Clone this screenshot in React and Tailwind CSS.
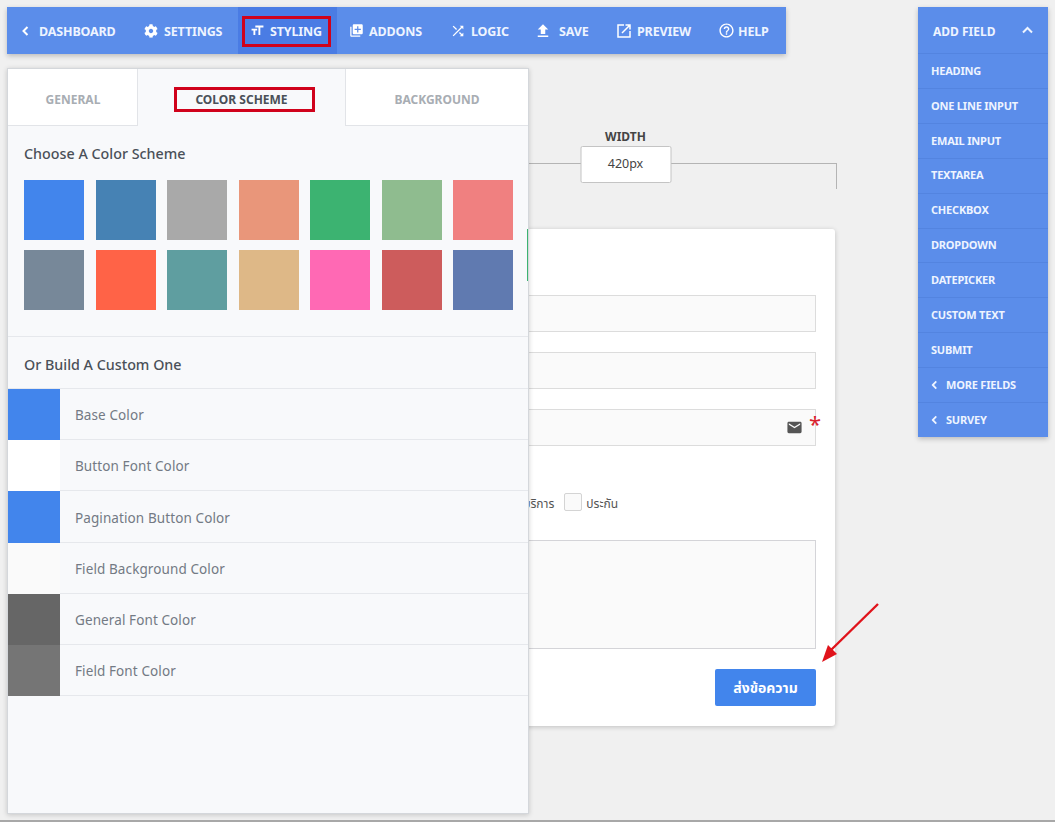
import React from "react";
import { MdTextFields, MdLibraryAdd, MdShuffle, MdFileUpload, MdHelpOutline, MdEmail } from "react-icons/md";
import { FaCog } from "react-icons/fa";

const font = "font-['Noto_Sans','Liberation_Sans',sans-serif]";
const thai = "font-['Noto_Sans','Noto_Sans_Thai','Liberation_Sans',sans-serif]";

function ChevronLeft({ className = "" }) {
  return (
    <svg className={className} width="7" height="10" viewBox="0 0 7 10" fill="none" stroke="currentColor" strokeWidth="2">
      <path d="M5.5 1L1.5 5l4 4" />
    </svg>
  );
}

function PreviewIcon() {
  return (
    <svg width="14" height="14" viewBox="0 0 14 14" fill="none" stroke="currentColor" strokeWidth="1.5">
      <path d="M7 1H1v12h12V7" />
      <path d="M5 9l8-8M8.5 1H13v4.5" />
    </svg>
  );
}

const nav = [
  { t: "DASHBOARD", w: "w-[124px] pl-[15px]", g: "gap-[10px]", i: <ChevronLeft /> },
  { t: "SETTINGS", w: "w-[107px] pl-[13px]", g: "gap-[6px]", i: <FaCog size={14} /> },
  { t: "STYLING", w: "w-[99px] pl-[12px] bg-[#4a7ce4]", g: "gap-[5px]", i: <MdTextFields size={15} className="-scale-x-100" /> },
  { t: "ADDONS", w: "w-[102px] pl-[12px]", g: "gap-[5px]", i: <MdLibraryAdd size={15} /> },
  { t: "LOGIC", w: "w-[84px] pl-[11px]", g: "gap-[5px]", i: <MdShuffle size={16} /> },
  { t: "SAVE", w: "w-[81px] pl-[11px]", g: "gap-[7px]", i: <MdFileUpload size={18} /> },
  { t: "PREVIEW", w: "w-[102px] pl-[13px]", g: "gap-[6px]", i: <PreviewIcon /> },
  { t: "HELP", w: "w-[80px] pl-[12px]", g: "gap-[3px]", i: <MdHelpOutline size={17} /> },
];

const swatches = [
  "bg-[#4285ec]", "bg-[#4682b4]", "bg-[#a9a9a9]", "bg-[#e9967a]", "bg-[#3cb371]", "bg-[#8fbc8f]", "bg-[#f08080]",
  "bg-[#778899]", "bg-[#ff6347]", "bg-[#5f9ea0]", "bg-[#deb887]", "bg-[#ff69b4]", "bg-[#cd5c5c]", "bg-[#607ab0]",
];

const rows = [
  ["Base Color", "bg-[#4285ec]", "h-[51px]"],
  ["Button Font Color", "bg-white", "h-[51px]"],
  ["Pagination Button Color", "bg-[#4285ec]", "h-[52px]"],
  ["Field Background Color", "bg-[#fafafa]", "h-[51px]"],
  ["General Font Color", "bg-[#666666]", "h-[51px]"],
  ["Field Font Color", "bg-[#757575]", "h-[51px]"],
];

const fields = [
  ["HEADING"], ["ONE LINE INPUT"], ["EMAIL INPUT"], ["TEXTAREA"], ["CHECKBOX"], ["DROPDOWN"],
  ["DATEPICKER"], ["CUSTOM TEXT"], ["SUBMIT"], ["MORE FIELDS", true], ["SURVEY", true],
];

const inputCls = "h-[37px] border border-[#dcdcdc] bg-[#fafafa]";

export default function App() {
  return (
    <div className={`${font} relative flex w-[1055px] h-[822px] overflow-hidden bg-[#f0f0f0] pt-[7px] pl-[7px] border-b-2 border-[#a8a8a8]`}>
      <div className="w-[779px] shrink-0">
        {/* toolbar */}
        <div className="relative flex h-[47px] bg-[#5b8dea] text-white shadow-[0_2px_5px_rgba(0,0,0,0.22)]">
          {nav.map((n) => (
            <div key={n.t} className={`flex h-full shrink-0 items-center ${n.w} ${n.g}`}>
              <span className="flex items-center justify-center">{n.i}</span>
              <span className="pt-[4px] text-[12.5px] font-bold tracking-[-0.15px] text-[#eef4ff]">{n.t}</span>
            </div>
          ))}
          <div className="absolute left-[235px] top-[9px] h-[31px] w-[89px] border-[3px] border-[#d0021b]" />
        </div>

        <div className="mt-[14px] flex items-start">
          {/* panel */}
          <div className="relative z-10 flex h-[746px] w-[522px] shrink-0 flex-col border border-[#d4d7db] bg-[#f8f9fb] shadow-[0_1px_5px_rgba(0,0,0,0.18)]">
            <div className="relative flex h-[57px] shrink-0 text-[12px] font-bold">
              <div className="flex w-[130px] items-center justify-center border-b border-r border-[#e2e4e8] bg-white pl-[1px] pt-[6px] text-[#a8adb3]">GENERAL</div>
              <div className="flex w-[207px] items-center justify-center pt-[5px] text-[#4a5058]">COLOR SCHEME</div>
              <div className="flex flex-1 items-center justify-center border-b border-l border-[#e2e4e8] bg-white pt-[6px] text-[#a8adb3]">BACKGROUND</div>
              <div className="absolute left-[166px] top-[18px] h-[25px] w-[141px] border-[3px] border-[#d0021b]" />
            </div>

            <div className="flex h-[211px] shrink-0 flex-col border-b border-[#e6e8ec] px-[16px]">
              <h2 className="mt-[18px] text-[14.3px] font-medium leading-5 text-[#4a5058]">Choose A Color Scheme</h2>
              <div className="mt-[16px] grid grid-cols-[repeat(7,60px)] gap-x-[11.5px] gap-y-[10px]">
                {swatches.map((c) => (
                  <div key={c} className={`h-[60px] w-[60px] ${c}`} />
                ))}
              </div>
            </div>

            <h2 className="flex h-[52px] shrink-0 items-center border-b border-[#e6e8ec] pl-[16px] pt-[4px] text-[14.3px] font-medium text-[#4a5058]">Or Build A Custom One</h2>

            {rows.map(([t, c, h]) => (
              <div key={t} className={`flex shrink-0 border-b border-[#e6e8ec] ${h}`}>
                <div className={`w-[52px] -mb-px ${c}`} />
                <div className="flex items-center pl-[15px] pt-[3px] text-[13.5px] tracking-[0.1px] text-[#737a84]">{t}</div>
              </div>
            ))}
          </div>

          {/* canvas */}
          <div className="-ml-[114px] w-[422px] shrink-0">
            <div className="relative ml-px mt-[95px] h-[26px] border-r border-t border-[#b4b4b4]">
              <div className="absolute left-[209.5px] -top-[18px] flex h-[37px] w-[91px] -translate-x-1/2 items-center justify-center rounded-[2px] border border-[#c4c4c4] bg-white text-[12.5px] text-[#444]">420px</div>
              <div className="absolute left-[209.5px] -top-[35px] -translate-x-1/2 text-[12px] font-bold leading-4 text-[#444]">WIDTH</div>
            </div>

            <div className="relative mt-[40px] flex h-[497px] w-[420px] flex-col rounded-[3px] bg-white pl-[20px] pr-[19px] pt-[66px] shadow-[0_1px_5px_rgba(0,0,0,0.2)]">
              <div className="absolute left-[112px] top-0 z-20 h-[52px] w-px bg-[#3cb371]" />
              <div className={inputCls} />
              <div className={`${inputCls} mt-[20px]`} />
              <div className={`${inputCls} relative mt-[20px]`}>
                <MdEmail size={17} className="absolute right-[12px] top-[9px] text-[#555]" />
                <span className="absolute -right-[6px] top-[1px] text-[22px] leading-6 text-[#d9232e]">*</span>
              </div>
              <div className={`${thai} mt-[47px] flex h-[18px] items-center justify-end pr-[198px] text-[12px] text-[#555]`}>
                <span className="mr-[10px] pt-[4px]">บริการ</span>
                <span className="mr-[4px] h-[18px] w-[18px] shrink-0 rounded-[2px] border border-[#d4d4d4] bg-[#fafafa]" />
                <span className="pt-[4px]">ประกัน</span>
              </div>
              <div className="mt-[29px] h-[109px] border border-[#d4d4d8] bg-[#fafafa]" />
              <div className="mt-[20px] flex justify-end">
                <button className={`${thai} h-[37px] w-[101px] rounded-[2px] bg-[#4285ec] text-[14px] font-bold text-white`}>ส่งข้อความ</button>
              </div>
            </div>
          </div>
        </div>
      </div>

      {/* add field */}
      <div className="ml-[132px] flex h-[430px] w-[130px] shrink-0 flex-col bg-[#5b8dea] text-[#eef4ff] shadow-[0_2px_5px_rgba(0,0,0,0.22)]">
        <div className="flex h-[46px] shrink-0 items-center justify-between pl-[15px] pr-[15px]">
          <span className="pt-[4px] text-[12px] font-bold">ADD FIELD</span>
          <svg width="11" height="8" viewBox="0 0 11 8" fill="none" stroke="currentColor" strokeWidth="2">
            <path d="M1 6.5l4.5-4.5L10 6.5" />
          </svg>
        </div>
        {fields.map(([t, sub]) => (
          <div key={t} className="flex flex-1 items-center border-t border-[#5384e0] pl-[13px] text-[11px] font-bold tracking-[-0.2px]">
            {sub && <ChevronLeft className="mr-[8px] scale-90" />}
            {t}
          </div>
        ))}
      </div>

      {/* annotation arrow */}
      <svg className="absolute left-[815px] top-[600px]" width="70" height="70" viewBox="0 0 70 70" fill="none">
        <path d="M63 4L16 50" stroke="#e0131b" strokeWidth="2.4" />
        <path d="M7 62l6-17 9 9z" fill="#e0131b" />
      </svg>
    </div>
  );
}
